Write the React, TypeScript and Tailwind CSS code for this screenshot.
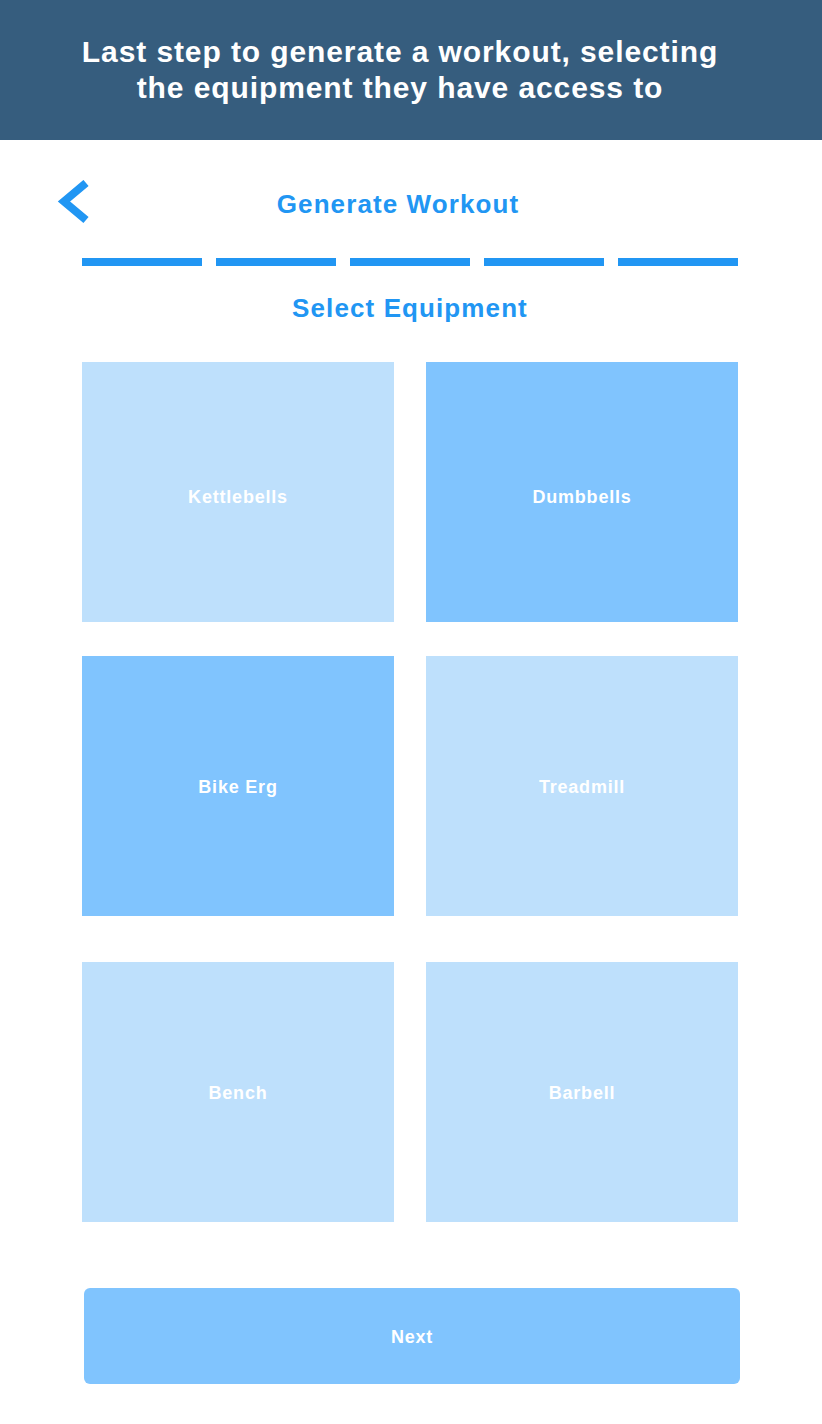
import { useState } from "react";

const items = [
  ["Kettlebells", "Dumbbells"],
  ["Bike Erg", "Treadmill"],
  ["Bench", "Barbell"],
];

export default function App() {
  const [selected, setSelected] = useState<string[]>(["Dumbbells", "Bike Erg"]);

  const toggle = (name: string) =>
    setSelected((s) => (s.includes(name) ? s.filter((x) => x !== name) : [...s, name]));

  return (
    <div
      className="min-h-screen w-[822px] bg-white"
      style={{ fontFamily: '"Liberation Sans", Arial, sans-serif' }}
    >
      {/* Banner */}
      <div className="h-[140px] bg-[#365d7e] flex items-center justify-center pr-[22px]">
        <h1 className="text-white font-bold text-[30px] leading-[36px] tracking-[0.9px] text-center">
          Last step to generate a workout, selecting
          <br />
          the equipment they have access to
        </h1>
      </div>

      {/* Top bar */}
      <div className="relative h-[118px]">
        <button className="absolute left-[57px] top-[40px] w-[34px] h-[44px]">
          <svg width="34" height="44" viewBox="0 0 34 44">
            <path d="M29 3 L7 21.5 L29 40" fill="none" stroke="#2196f3" strokeWidth="8" strokeLinejoin="miter" />
          </svg>
        </button>
        <div className="pt-[48px] pr-[26px] text-center text-[#2196f3] font-bold text-[26px] leading-[32px] tracking-[1.1px]">
          Generate Workout
        </div>
        <div className="absolute left-[82px] top-[118px] flex gap-[14px]">
          {[0, 1, 2, 3, 4].map((i) => (
            <div key={i} className="w-[120px] h-[8px] bg-[#2196f3]" />
          ))}
        </div>
      </div>

      <div className="pt-[34px] pr-[2px] text-center text-[#2196f3] font-bold text-[26px] leading-[32px] tracking-[1.1px]">
        Select Equipment
      </div>

      <div className="pl-[82px] pr-[84px] pt-[38px]">
        {items.map((row, r) => (
          <div
            key={r}
            className={`grid grid-cols-2 gap-[32px] ${r === 1 ? "mt-[34px]" : r === 2 ? "mt-[46px]" : ""}`}
          >
            {row.map((name) => (
              <button
                key={name}
                onClick={() => toggle(name)}
                className={`h-[260px] flex items-center justify-center text-white font-bold text-[18px] tracking-[0.8px] ${
                  r === 0 ? "pt-[10px]" : "pt-[2px]"
                } ${selected.includes(name) ? "bg-[#80c4fe]" : "bg-[#bee0fc]"}`}
              >
                {name}
              </button>
            ))}
          </div>
        ))}
      </div>

      <div className="pl-[84px] pr-[82px] pt-[66px] pb-[40px]">
        <button className="w-full h-[96px] rounded-[6px] bg-[#80c4fe] text-white font-bold text-[18px] tracking-[0.8px] pt-[2px]">
          Next
        </button>
      </div>
    </div>
  );
}
